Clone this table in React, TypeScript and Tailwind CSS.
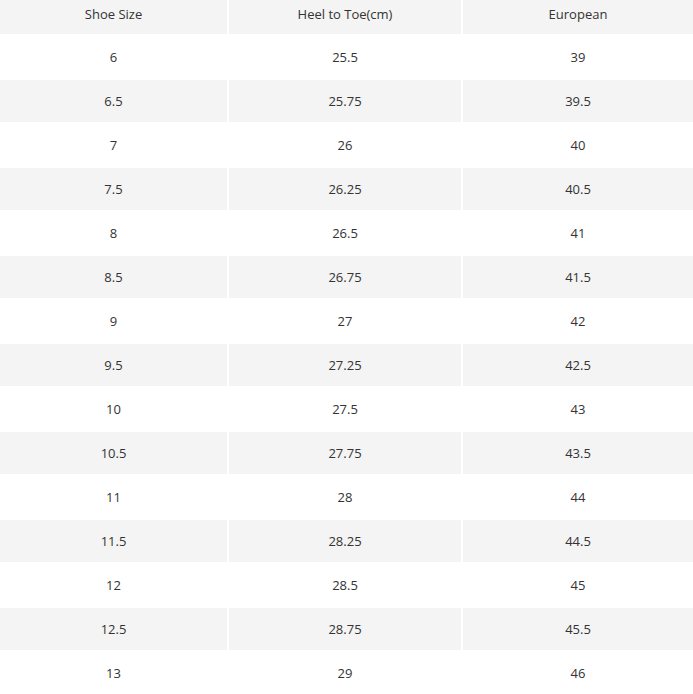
const rows: [string, string, string][] = [
  ['6', '25.5', '39'],
  ['6.5', '25.75', '39.5'],
  ['7', '26', '40'],
  ['7.5', '26.25', '40.5'],
  ['8', '26.5', '41'],
  ['8.5', '26.75', '41.5'],
  ['9', '27', '42'],
  ['9.5', '27.25', '42.5'],
  ['10', '27.5', '43'],
  ['10.5', '27.75', '43.5'],
  ['11', '28', '44'],
  ['11.5', '28.25', '44.5'],
  ['12', '28.5', '45'],
  ['12.5', '28.75', '45.5'],
  ['13', '29', '46'],
]

const headers = ['Shoe Size', 'Heel to Toe(cm)', 'European']

export default function App() {
  return (
    <div className="w-[693px] h-[694px] overflow-hidden bg-white font-['Open_Sans',sans-serif] text-[13px] text-[#333]">
      <div className="grid grid-cols-[227px_232px_1fr] gap-[2px]">
        {headers.map((h) => (
          <div
            key={h}
            className="h-[34px] bg-[#f4f4f4] flex items-center justify-center pb-[4px]"
          >
            {h}
          </div>
        ))}
        {rows.map((row, i) =>
          row.map((cell, j) => (
            <div
              key={`${i}-${j}`}
              className={`h-[42px] flex items-center justify-center pt-[2px] ${
                i % 2 === 1 ? 'bg-[#f4f4f4]' : 'bg-white'
              }`}
            >
              {cell}
            </div>
          ))
        )}
      </div>
    </div>
  )
}
